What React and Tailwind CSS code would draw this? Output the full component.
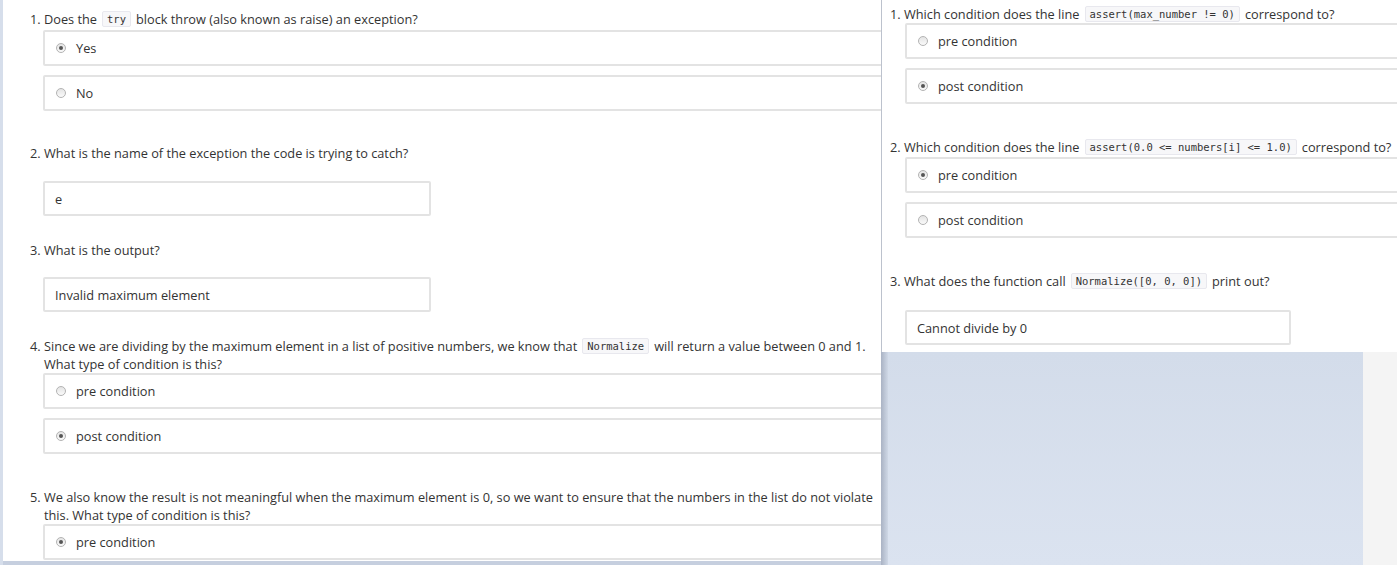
import React from 'react';

const font = { fontFamily: '"Open Sans", "Liberation Sans", sans-serif' };

function Code({ children }) {
  return (
    <code className="mx-[5px] inline-block rounded-[2px] border border-[#e8e8ee] bg-[#f7f7f9] px-[4px] align-[1px] font-['DejaVu_Sans_Mono',monospace] text-[10.5px] leading-[14px] text-[#333]">
      {children}
    </code>
  );
}

function Radio({ checked }) {
  return (
    <span className="flex h-[10px] w-[10px] shrink-0 items-center justify-center rounded-full border border-[#b3b3b3] bg-gradient-to-b from-[#e4e4e4] to-[#fafafa]">
      {checked && <span className="h-[4px] w-[4px] rounded-full bg-[#555]" />}
    </span>
  );
}

function Option({ label, checked }) {
  return (
    <div className="flex h-[36px] w-[1000px] items-center rounded-[2px] border-2 border-[#e3e3e3] bg-white pl-[11px]">
      <Radio checked={checked} />
      <span className="ml-[10px]">{label}</span>
    </div>
  );
}

function Question({ n, children, className = '' }) {
  return (
    <div className={`flex ${className}`}>
      <span className="w-[14px] shrink-0">{n}.</span>
      <div className="max-w-[836px]">{children}</div>
    </div>
  );
}

function Answer({ value, width }) {
  return (
    <div className={`flex h-[35px] items-center rounded-[2px] border-2 border-[#e3e3e3] bg-white pl-[10px] ${width}`}>
      {value}
    </div>
  );
}

function LeftPanel() {
  return (
    <div className="relative flex h-[565px] w-[881px] shrink-0 flex-col overflow-hidden bg-white">
      <div className="absolute left-0 top-0 h-full w-[3px] bg-[#d6deeb]" />
      <div className="flex-1 pl-[30px] pt-[10px]">
        <Question n={1}>
          Does the<Code>try</Code>block throw (also known as raise) an exception?
        </Question>
        <div className="ml-[13px] mt-[2px] flex flex-col gap-[9px]">
          <Option label="Yes" checked />
          <Option label="No" />
        </div>

        <Question n={2} className="mt-[33px]">
          What is the name of the exception the code is trying to catch?
        </Question>
        <div className="ml-[13px] mt-[19px]">
          <Answer value="e" width="w-[388px]" />
        </div>

        <Question n={3} className="mt-[25px]">
          What is the output?
        </Question>
        <div className="ml-[13px] mt-[18px]">
          <Answer value="Invalid maximum element" width="w-[388px]" />
        </div>

        <Question n={4} className="mt-[25px]">
          Since we are dividing by the maximum element in a list of positive numbers, we know that
          <Code>Normalize</Code>will return a value between 0 and 1. What type of condition is this?
        </Question>
        <div className="ml-[13px] flex flex-col gap-[9px]">
          <Option label="pre condition" />
          <Option label="post condition" checked />
        </div>

        <Question n={5} className="mt-[34px]">
          We also know the result is not meaningful when the maximum element is 0, so we want to ensure
          that the numbers in the list do not violate this. What type of condition is this?
        </Question>
        <div className="ml-[13px] flex flex-col gap-[9px]">
          <Option label="pre condition" checked />
        </div>
      </div>
      <div className="h-[4px] w-full shrink-0 bg-[#c6cfdf]" />
    </div>
  );
}

function RightPanel() {
  return (
    <div className="flex h-[565px] flex-1 flex-col overflow-hidden">
      <div className="h-[352px] shrink-0 overflow-hidden border-l border-[#bcc2cd] bg-white pl-[8px] pt-[5px]">
        <Question n={1}>
          Which condition does the line<Code>assert(max_number != 0)</Code>correspond to?
        </Question>
        <div className="ml-[15px] flex flex-col gap-[9px]">
          <Option label="pre condition" />
          <Option label="post condition" checked />
        </div>

        <Question n={2} className="mt-[34px] whitespace-nowrap">
          Which condition does the line<Code>assert(0.0 &lt;= numbers[i] &lt;= 1.0)</Code>correspond to?
        </Question>
        <div className="ml-[15px] mt-[1px] flex flex-col gap-[9px]">
          <Option label="pre condition" checked />
          <Option label="post condition" />
        </div>

        <Question n={3} className="mt-[34px]">
          What does the function call<Code>Normalize([0, 0, 0])</Code>print out?
        </Question>
        <div className="ml-[15px] mt-[20px]">
          <Answer value="Cannot divide by 0" width="w-[386px]" />
        </div>
      </div>
      <div className="flex flex-1">
        <div className="w-[7px] bg-gradient-to-r from-[#aab3c4] to-[#cfd8e6]" />
        <div className="w-[475px] bg-gradient-to-b from-[#d3dcea] to-[#dbe3f0]" />
        <div className="flex-1 bg-[#f4f4f4]" />
      </div>
    </div>
  );
}

export default function App() {
  return (
    <div className="flex h-[565px] w-[1397px] overflow-hidden text-[12.75px] leading-[18px] text-[#333]" style={font}>
      <LeftPanel />
      <RightPanel />
    </div>
  );
}
